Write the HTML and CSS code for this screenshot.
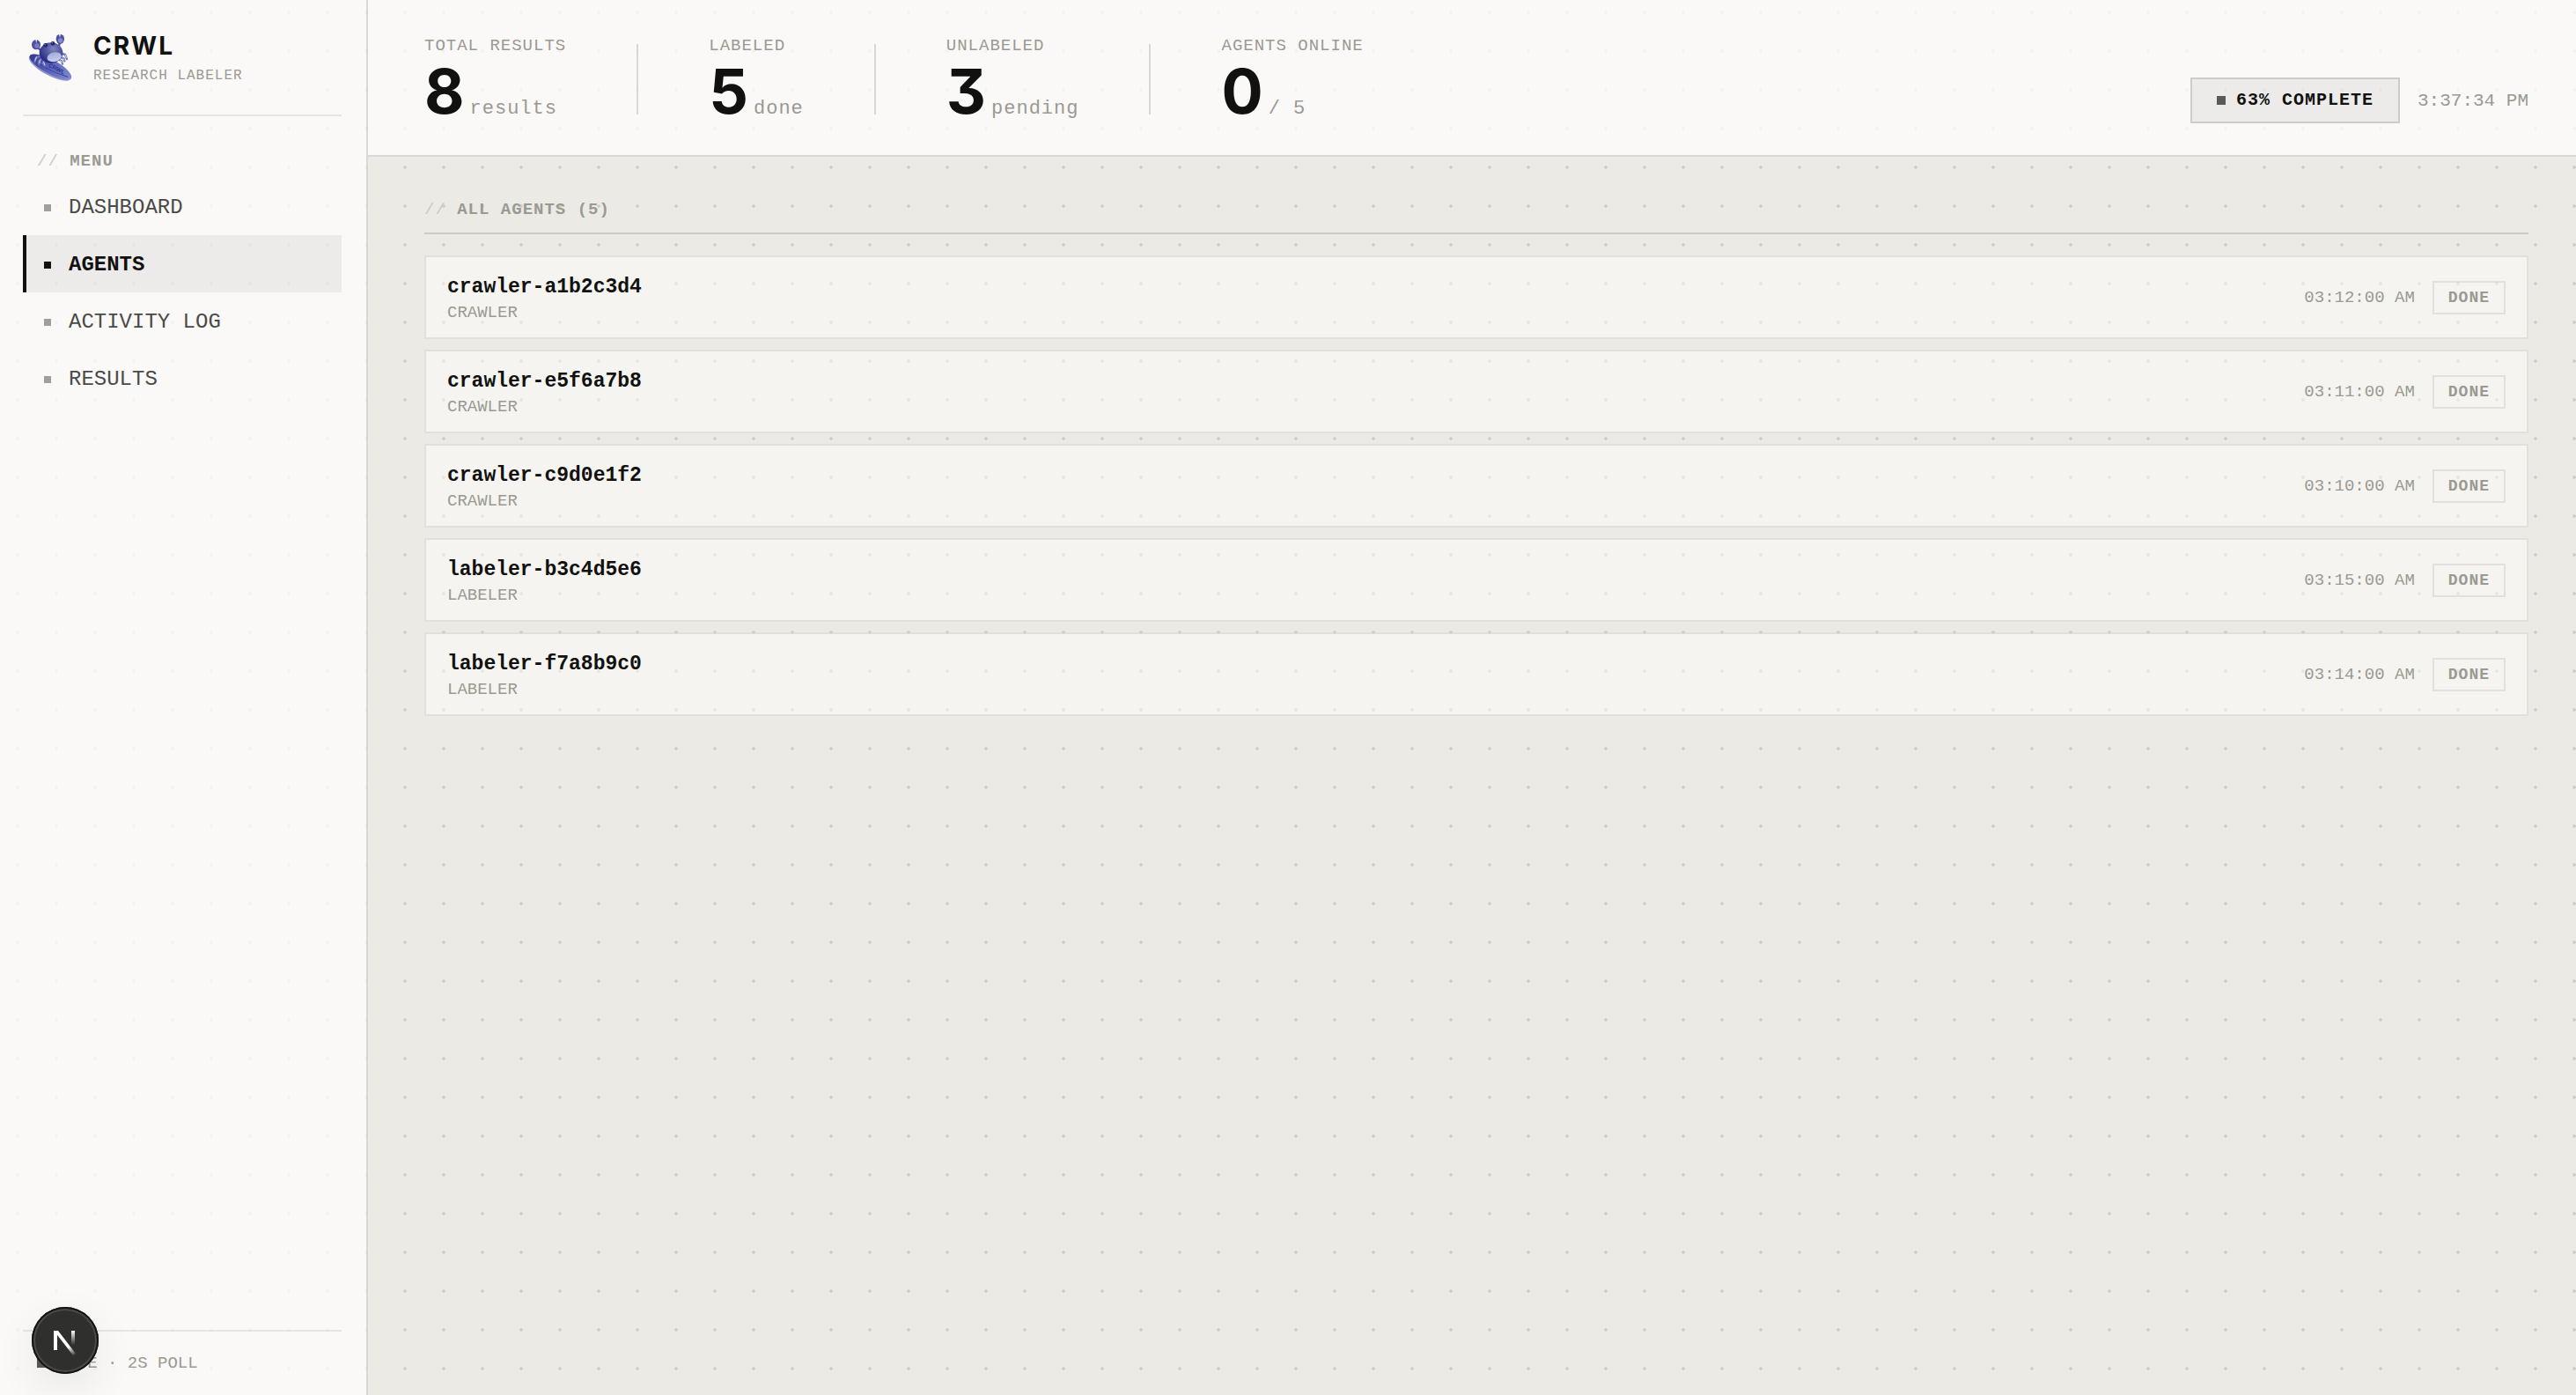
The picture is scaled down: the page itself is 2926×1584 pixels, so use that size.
FILE: index.html
```html
<!DOCTYPE html>
<html lang="en">
<head>
  <meta charset="UTF-8" />
  <meta name="viewport" content="width=device-width, initial-scale=1.0"/>
  <title>CRWL - Research Labeler</title>
  <link rel="stylesheet" href="styles.css">
</head>
<body>

<div class="app">
  <aside class="sidebar">
    <div class="brand">
      <svg class="brand-logo" viewBox="30 33 168 180" aria-hidden="true">
        <defs>
          <linearGradient id="board" x1="0" y1="0" x2="1" y2="0">
            <stop offset="0" stop-color="#34358c"/>
            <stop offset="0.5" stop-color="#5d64bb"/>
            <stop offset="1" stop-color="#8089cf"/>
          </linearGradient>
          <radialGradient id="shell" cx="0.6" cy="0.3" r="0.7">
            <stop offset="0" stop-color="#8286bb"/>
            <stop offset="0.5" stop-color="#50559e"/>
            <stop offset="1" stop-color="#25287c"/>
          </radialGradient>
          <linearGradient id="belly" x1="0" y1="0" x2="0" y2="1">
            <stop offset="0" stop-color="#a2aad8"/>
            <stop offset="1" stop-color="#c9cff0"/>
          </linearGradient>
        </defs>
        <!-- surfboard -->
        <ellipse cx="111" cy="152" rx="81" ry="27" transform="rotate(28 111 152)" fill="#8b93cf"/>
        <ellipse cx="112" cy="149" rx="79" ry="24" transform="rotate(28 112 149)" fill="url(#board)"/>
        <path d="M45 110Q80 158 172 184" fill="none" stroke="#3b3f9e" stroke-width="3"/>
        <text class="board-text" x="104" y="149" transform="rotate(27 104 149)">CRWL</text>
        <!-- arms -->
        <g fill="none" stroke="#4a50a5" stroke-width="7" stroke-linecap="round">
          <path d="M69 84L82 97"/>
          <path d="M143 68L140 86"/>
        </g>
        <!-- legs -->
        <g fill="none" stroke="#747bc0" stroke-width="7" stroke-linecap="round" stroke-linejoin="round">
          <path d="M79 111L63 119L58 133"/>
          <path d="M82 121L72 132L73 141"/>
          <path d="M92 126L86 138L92 146"/>
          <path d="M151 105L162 108L168 123"/>
          <path d="M147 117L158 122L160 130"/>
          <path d="M141 125L150 130L153 140"/>
        </g>
        <g fill="none" stroke="#d6daf5" stroke-width="3" stroke-linecap="round">
          <path d="M64 117L60 127M76 128L75 137M89 134L93 143"/>
          <path d="M163 110L166 118M155 121L160 126M146 128L151 135"/>
        </g>
        <!-- body -->
        <ellipse cx="114" cy="102" rx="40" ry="35" fill="url(#shell)"/>
        <ellipse cx="125" cy="116" rx="25" ry="16" transform="rotate(-12 125 116)" fill="url(#belly)"/>
        <!-- claws -->
        <ellipse cx="63" cy="74" rx="15" ry="17" fill="#4c529f"/>
        <ellipse cx="66" cy="78" rx="8" ry="8" fill="#777dbd"/>
        <path d="M61 56L66 57L64 70Z" fill="#faf9f7"/>
        <ellipse cx="145" cy="55" rx="14" ry="17" fill="#4c529f"/>
        <ellipse cx="146" cy="60" rx="8" ry="8" fill="#858bc8"/>
        <path d="M141 37L147 37L144 51Z" fill="#faf9f7"/>
        <!-- eyes -->
        <circle cx="95" cy="76" r="7" fill="#22246e"/>
        <circle cx="120" cy="70" r="7" fill="#22246e"/>
        <circle cx="93" cy="74" r="2" fill="#8f95d2"/>
        <circle cx="118" cy="68" r="2" fill="#8f95d2"/>
      </svg>
      <div class="brand-text">
        <h1 class="brand-name">CRWL</h1>
        <p class="brand-sub">RESEARCH LABELER</p>
      </div>
    </div>

    <nav class="menu">
      <h2 class="label menu-label"><span class="slashes">//</span> MENU</h2>
      <a class="menu-item" href="#dashboard">DASHBOARD</a>
      <a class="menu-item active" href="#agents" aria-current="page">AGENTS</a>
      <a class="menu-item" href="#activity">ACTIVITY LOG</a>
      <a class="menu-item" href="#results">RESULTS</a>
    </nav>

    <div class="poll">LIVE · 2S POLL</div>
  </aside>

  <div class="content">
    <header class="topbar">
      <div class="stats">
        <div class="stat">
          <div class="stat-label">TOTAL RESULTS</div>
          <div class="stat-value">8<span class="stat-unit">results</span></div>
        </div>
        <div class="divider"></div>
        <div class="stat">
          <div class="stat-label">LABELED</div>
          <div class="stat-value">5<span class="stat-unit">done</span></div>
        </div>
        <div class="divider"></div>
        <div class="stat">
          <div class="stat-label">UNLABELED</div>
          <div class="stat-value">3<span class="stat-unit">pending</span></div>
        </div>
        <div class="divider"></div>
        <div class="stat">
          <div class="stat-label">AGENTS ONLINE</div>
          <div class="stat-value">0<span class="stat-unit">/ 5</span></div>
        </div>
      </div>
      <div class="status">
        <div class="progress">63% COMPLETE</div>
        <time class="clock">3:37:34 PM</time>
      </div>
    </header>

    <main class="agents">
      <h2 class="label agents-title"><span class="slashes">//</span> ALL AGENTS (5)</h2>
      <ul class="agent-list">
        <li class="agent">
          <div>
            <div class="agent-name">crawler-a1b2c3d4</div>
            <div class="agent-type">CRAWLER</div>
          </div>
          <div class="agent-meta"><time>03:12:00 AM</time><span class="badge">DONE</span></div>
        </li>
        <li class="agent">
          <div>
            <div class="agent-name">crawler-e5f6a7b8</div>
            <div class="agent-type">CRAWLER</div>
          </div>
          <div class="agent-meta"><time>03:11:00 AM</time><span class="badge">DONE</span></div>
        </li>
        <li class="agent">
          <div>
            <div class="agent-name">crawler-c9d0e1f2</div>
            <div class="agent-type">CRAWLER</div>
          </div>
          <div class="agent-meta"><time>03:10:00 AM</time><span class="badge">DONE</span></div>
        </li>
        <li class="agent">
          <div>
            <div class="agent-name">labeler-b3c4d5e6</div>
            <div class="agent-type">LABELER</div>
          </div>
          <div class="agent-meta"><time>03:15:00 AM</time><span class="badge">DONE</span></div>
        </li>
        <li class="agent">
          <div>
            <div class="agent-name">labeler-f7a8b9c0</div>
            <div class="agent-type">LABELER</div>
          </div>
          <div class="agent-meta"><time>03:14:00 AM</time><span class="badge">DONE</span></div>
        </li>
      </ul>
    </main>
  </div>
</div>

<button class="dev-button" type="button" aria-label="Open dev tools">
  <svg viewBox="0 0 76 76" aria-hidden="true">
    <defs>
      <linearGradient id="diag" gradientUnits="userSpaceOnUse" x1="42" y1="45" x2="50" y2="55">
        <stop offset="0" stop-color="#fff"/>
        <stop offset="1" stop-color="#fff" stop-opacity="0"/>
      </linearGradient>
      <linearGradient id="stem" gradientUnits="userSpaceOnUse" x1="47" y1="27" x2="47" y2="43">
        <stop offset="0" stop-color="#fff"/>
        <stop offset="1" stop-color="#fff" stop-opacity="0"/>
      </linearGradient>
    </defs>
    <rect x="25" y="27" width="4" height="22" fill="#fff"/>
    <path d="M25 27h5l20 26-3 2L26 28z" fill="url(#diag)"/>
    <rect x="45" y="27" width="4" height="17" fill="url(#stem)"/>
  </svg>
</button>

</body>
</html>
```
FILE: styles.css
```css
* {
  box-sizing: border-box;
}

body {
  margin: 0;
  color: #111110;
  background-color: #ebeae5;
  background-image: radial-gradient(circle, rgba(0, 0, 0, 0.11) 2px, transparent 2px);
  background-size: 44px 44px;
  background-position: -2px -8px;
  font-family: 'Liberation Mono', monospace;
}

h1, h2, p, ul {
  margin: 0;
  padding: 0;
}

.app {
  display: flex;
  min-height: 100vh;
}

/* Sidebar */
.sidebar {
  display: flex;
  flex-direction: column;
  flex: 0 0 418px;
  padding: 36px 28px 0 26px;
  background-color: rgba(255, 254, 253, 0.75);
  border-right: 2px solid rgba(0, 0, 0, 0.13);
}

.brand {
  display: flex;
  align-items: center;
  gap: 20px;
  padding: 0 4px 32px;
  border-bottom: 2px solid rgba(0, 0, 0, 0.08);
}

.brand-logo {
  width: 56px;
  height: 60px;
}

.board-text {
  font: bold 20px 'Liberation Sans', sans-serif;
  fill: #2f3390;
}

.brand-name {
  font-family: Inter, sans-serif;
  font-size: 28px;
  line-height: 32px;
  letter-spacing: 2px;
}

.brand-sub {
  margin-top: 6px;
  font-size: 16px;
  line-height: 24px;
  letter-spacing: 1px;
  color: #9a9a92;
}

.label {
  font-size: 19px;
  letter-spacing: 1px;
  color: #9a9a92;
}

.slashes {
  font-weight: normal;
  color: #cccbc6;
}

.menu {
  flex: 1;
}

.menu-label {
  margin: 39px 16px 7px;
  line-height: 24px;
}

.menu-item {
  display: flex;
  align-items: center;
  gap: 20px;
  padding: 17px 20px 15px;
  border-left: 4px solid transparent;
  font-size: 24px;
  line-height: 33px;
  color: #4a4a47;
  text-decoration: none;
}

.menu-item::before {
  content: "";
  width: 8px;
  height: 8px;
  background-color: #9f9f9b;
}

.menu-item.active {
  color: #111110;
  font-weight: bold;
  background-color: rgba(0, 0, 0, 0.055);
  border-left-color: #111110;
}

.menu-item.active::before {
  background-color: #111110;
}

.poll {
  display: flex;
  align-items: center;
  gap: 13px;
  padding: 24px 16px;
  border-top: 2px solid rgba(0, 0, 0, 0.08);
  font-size: 19px;
  line-height: 24px;
  color: #9a9a92;
}

.poll::before,
.progress::before {
  content: "";
  width: 10px;
  height: 10px;
  background-color: #5a5a57;
}

/* Top bar */
.content {
  flex: 1;
  min-width: 0;
}

.topbar {
  display: flex;
  justify-content: space-between;
  align-items: flex-end;
  padding: 40px 54px 36px 64px;
  background-color: rgba(255, 254, 253, 0.75);
  border-bottom: 2px solid rgba(0, 0, 0, 0.13);
}

.stats {
  display: flex;
  align-items: center;
  gap: 80px;
}

.stat-label {
  font-size: 19px;
  line-height: 24px;
  letter-spacing: 1px;
  color: #9a9a92;
}

.stat-value {
  display: flex;
  align-items: baseline;
  gap: 6px;
  height: 72px;
  margin-top: 4px;
  font-family: Inter, sans-serif;
  font-size: 70px;
  font-weight: bold;
  font-feature-settings: "cv09";
  line-height: 72px;
}

.stat-unit {
  font-family: 'Liberation Mono', monospace;
  font-size: 22px;
  font-weight: normal;
  line-height: 24px;
  letter-spacing: 1px;
  color: #9a9a92;
}

.divider {
  width: 2px;
  height: 80px;
  background-color: #d9d8d6;
}

.status {
  display: flex;
  align-items: center;
  gap: 20px;
}

.progress {
  display: flex;
  align-items: center;
  gap: 12px;
  padding: 12px 28px;
  border: 2px solid #cccccb;
  background-color: rgba(0, 0, 0, 0.055);
  font-size: 20px;
  font-weight: bold;
  line-height: 24px;
  letter-spacing: 1px;
}

.clock {
  font-size: 21px;
  color: #9a9a92;
}

/* Agents */
.agents {
  padding: 45px 54px 44px 64px;
}

.agents-title {
  margin-bottom: 24px;
  padding-bottom: 11px;
  border-bottom: 2px solid #cccbc7;
  line-height: 30px;
}

.agent-list {
  display: grid;
  gap: 12px;
  list-style: none;
}

.agent {
  display: flex;
  justify-content: space-between;
  align-items: center;
  padding: 16px 24px;
  border: 2px solid rgba(0, 0, 0, 0.08);
  background-color: rgba(255, 254, 251, 0.5);
}

.agent-name {
  font-size: 23px;
  font-weight: bold;
  line-height: 36px;
}

.agent-type {
  font-size: 19px;
  line-height: 23px;
  color: #9a9a92;
}

.agent-meta {
  display: flex;
  align-items: center;
  gap: 20px;
  font-size: 19px;
  color: #9a9a92;
}

.badge {
  padding: 5px 16px;
  border: 2px solid rgba(0, 0, 0, 0.08);
  font-size: 18px;
  font-weight: bold;
  line-height: 24px;
  letter-spacing: 1px;
}

/* Floating dev tools button */
.dev-button {
  position: fixed;
  left: 36px;
  bottom: 24px;
  width: 76px;
  height: 76px;
  padding: 0;
  border: none;
  border-radius: 50%;
  background-color: #2f2f2d;
  box-shadow: inset 0 0 0 2px #141413, inset 0 0 0 4px #4a4a48, 0 16px 48px rgba(0, 0, 0, 0.08);
  cursor: pointer;
}

.dev-button svg {
  display: block;
}
```
